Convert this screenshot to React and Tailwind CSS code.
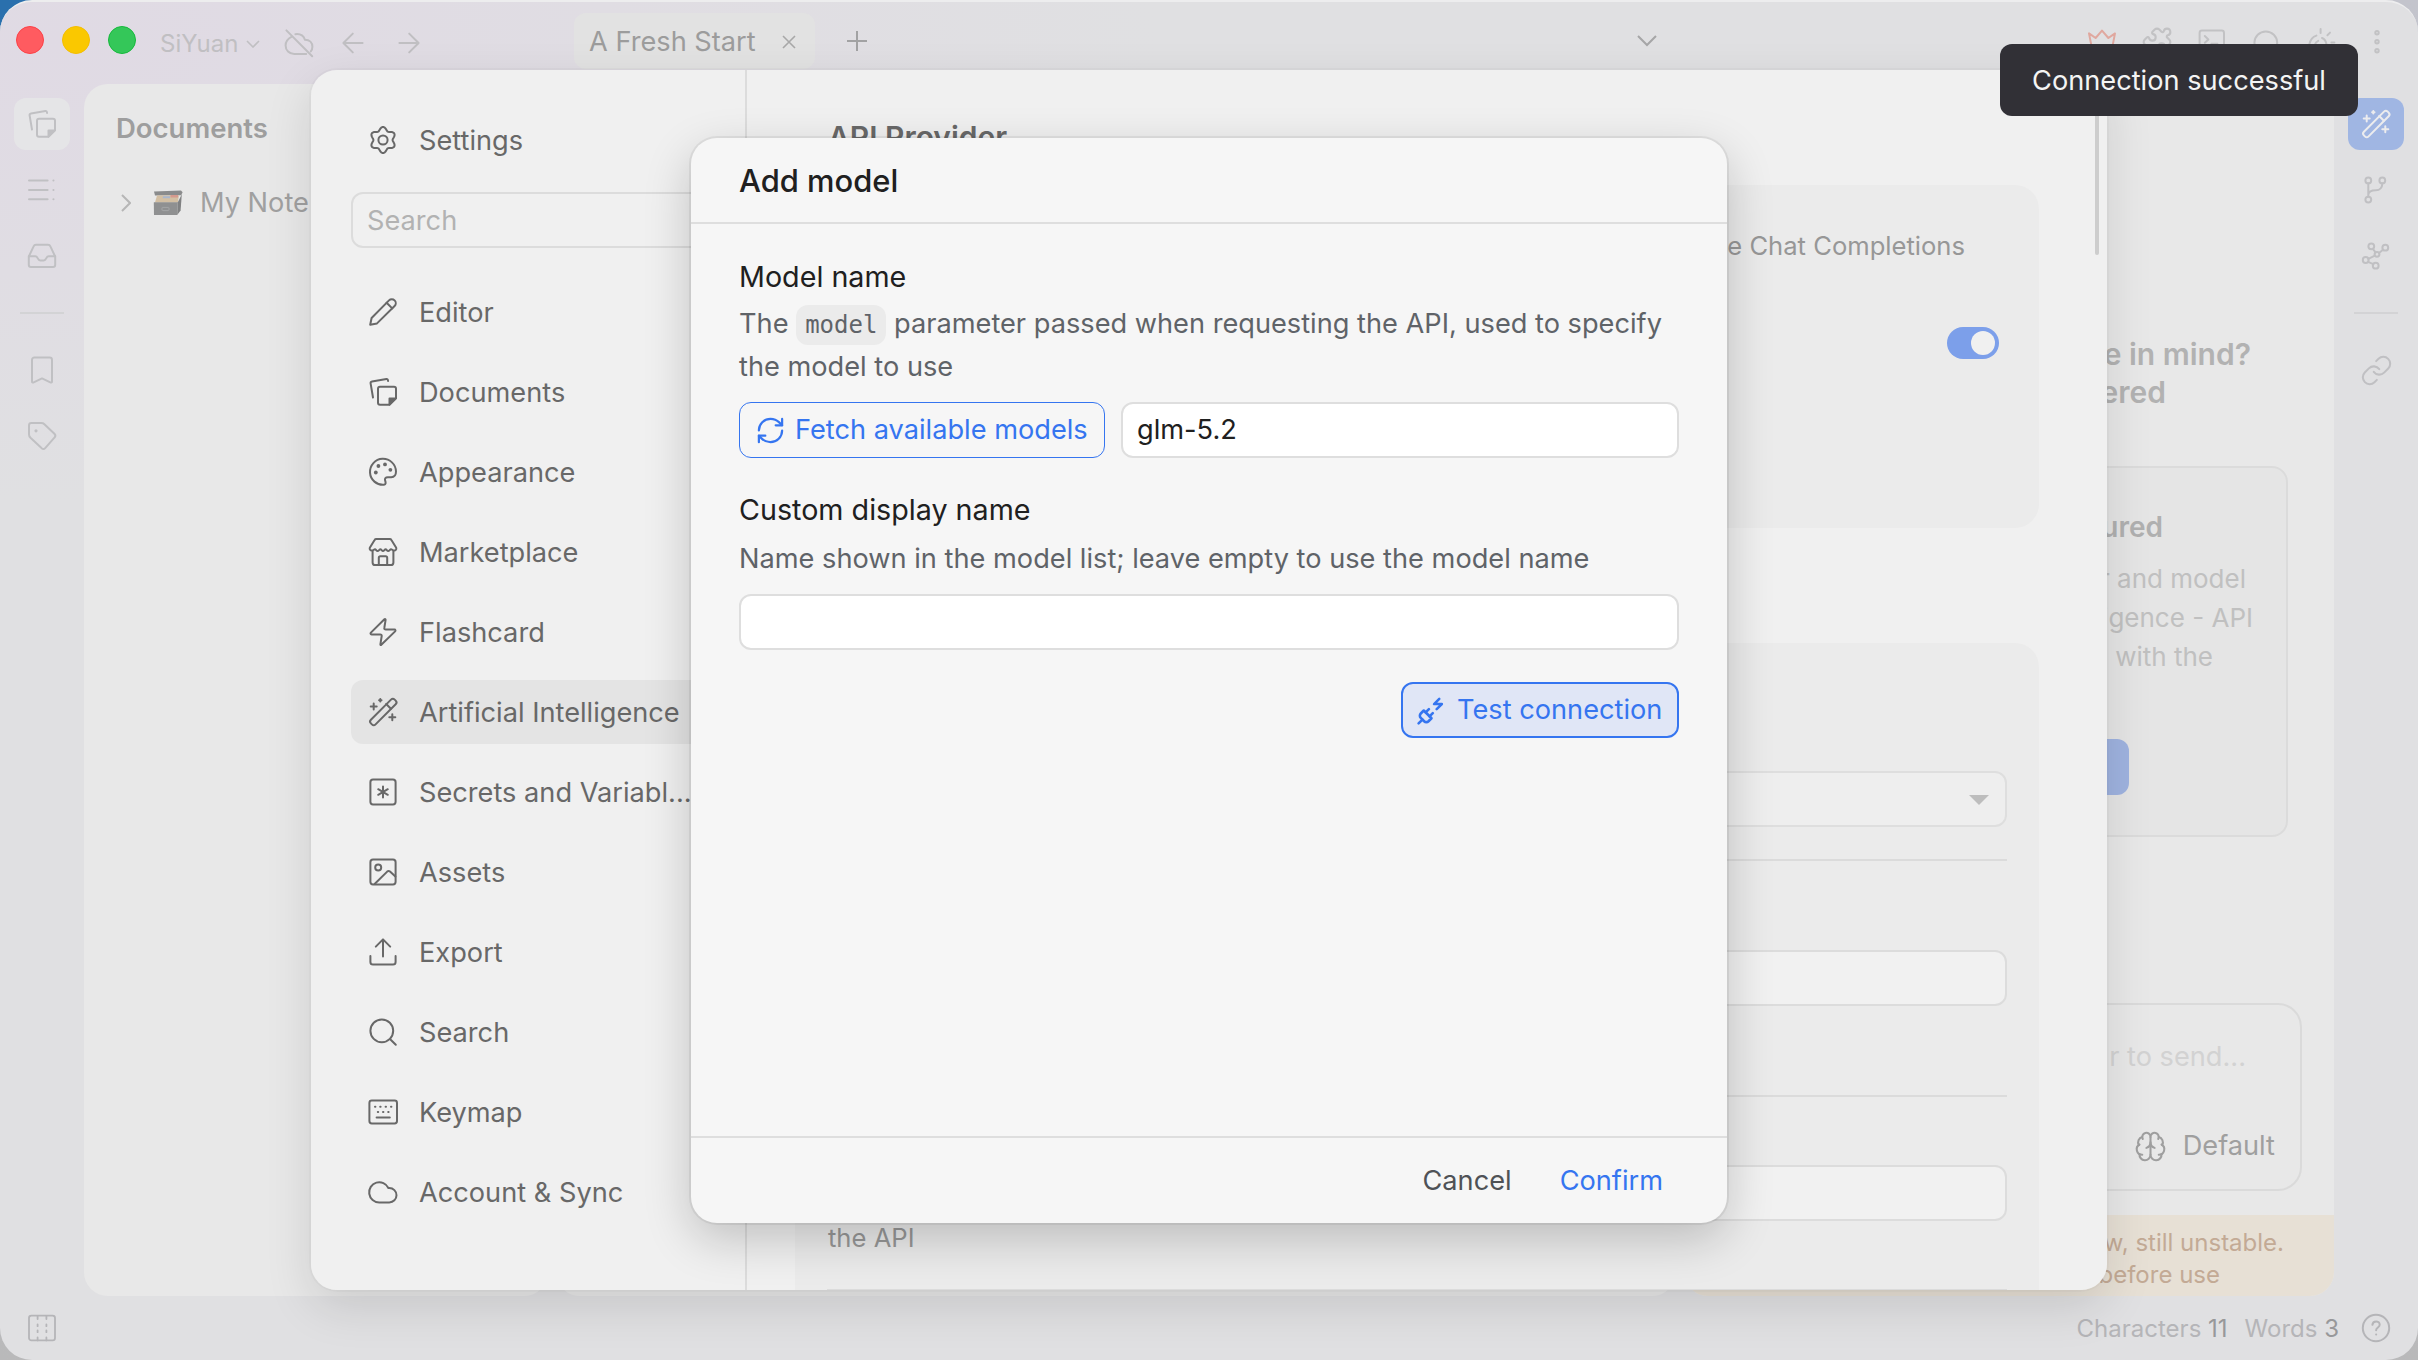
import { Brain, Link, PlugZap, Puzzle, RefreshCw } from 'lucide-react';

// Six-lobed gear outline, sampled once at load
const GEAR = Array.from({ length: 121 }, (_, i) => {
  const a = (i / 120) * Math.PI * 2;
  const r = 11.3 + 1.7 * Math.cos(6 * a);
  const x = (14 + r * Math.sin(a)).toFixed(2);
  const y = (14 - r * Math.cos(a)).toFixed(2);
  return `${i === 0 ? 'M' : 'L'}${x} ${y}`;
}).join('') + 'Z';

function Icon({ className = '', stroke = 2, children }) {
  return (
    <svg
      viewBox="0 0 28 28"
      width="28"
      height="28"
      fill="none"
      stroke="currentColor"
      strokeWidth={stroke}
      strokeLinecap="round"
      strokeLinejoin="round"
      className={`shrink-0 overflow-visible ${className}`}
    >
      {children}
    </svg>
  );
}

const icons = {
  gear: (
    <>
      <path d={GEAR} />
      <circle cx="14" cy="14" r="4.6" />
    </>
  ),
  pencil: (
    <>
      <path d="M1.2 26.8 2.6 20 20 2.4a3.9 3.9 0 0 1 5.6 5.6L8 25.4Z" />
      <path d="m17.6 4.8 5.6 5.6" />
    </>
  ),
  docs: (
    <>
      <path d="M4 19.5 1.6 5.4c-.2-1.1.3-1.8 1.4-2L17.4 1.1c.9-.1 1.3.2 1.5 1l.2.9" />
      <path d="M11 8.8h14a2 2 0 0 1 2 2v9.4l-6.6 6.6H11a2 2 0 0 1-2-2v-14a2 2 0 0 1 2-2Z" />
      <path d="M20.5 26.6v-6.2h6.3Z" fill="currentColor" />
    </>
  ),
  palette: (
    <>
      <path d="M15 26.8A13 13 0 1 1 27 13.6c0 3.6-1.7 5.6-4.8 5.6h-3.4c-2.2 0-3.3 1.3-2.7 3.2.8 2.4.9 4.2-1.1 4.4Z" />
      <g fill="currentColor" stroke="none">
        <circle cx="6.8" cy="14.5" r="1.9" />
        <circle cx="9.4" cy="8" r="1.9" />
        <circle cx="16" cy="6.4" r="1.9" />
        <circle cx="21.4" cy="11.8" r="1.9" />
      </g>
    </>
  ),
  store: (
    <>
      <path d="M.8 9.8 5.6 1.9Q6.1 1 7.2 1h13.6q1.1 0 1.6.9l4.8 7.9c.5 1.4-.5 2.8-2 2.8-1.6 0-2.2-1.4-3.2-1.4s-1.6 1.9-2.8 1.9-1.6-1.9-2.6-1.9-1.5 1.9-2.6 1.9-1.6-1.9-2.6-1.9-1.6 1.9-2.8 1.9-1.6-1.9-2.6-1.9-1.6 1.4-3.2 1.4c-1.5 0-2.5-1.4-2-2.8Z" />
      <path d="M3.6 13v11.4A2.6 2.6 0 0 0 6.2 27h15.6a2.6 2.6 0 0 0 2.6-2.6V13" />
      <path d="M9.8 26.6v-6.8q0-1.6 1.6-1.6h5.2q1.6 0 1.6 1.6v6.8" />
    </>
  ),
  zap: (
    <path d="M15.4 1.2 1.9 14.6c-.7.8-.4 1.8.6 1.8h8.7c1.1 0 1.7.6 1.5 1.6l-1.3 8.4c-.1.6.4.9.9.4L26.1 13.4c.7-.8.4-1.8-.6-1.8h-8.7c-1.1 0-1.7-.6-1.5-1.6l1.3-8.2c.1-.7-.6-1.1-1.2-.6Z" />
  ),
  wand: (
    <>
      <rect x="-2.6" y="10.9" width="33.6" height="6.6" rx="2.6" transform="rotate(-45 14 14)" />
      <path d="m17.2 6 4.7 4.7" />
      <path d="M4.7 5.4v6M1.7 8.4h6M23.3 16.2v6M20.3 19.2h6M11.3 1v2.4M10.1 2.2h2.4" />
    </>
  ),
  secret: (
    <>
      <rect x="1.4" y="1.6" width="25.2" height="24.8" rx="2.6" />
      <path d="M14 8.6v10.8M9.2 11.2l9.6 5.6M18.8 11.2l-9.6 5.6" />
    </>
  ),
  image: (
    <>
      <rect x="1.4" y="1.6" width="25.2" height="24.8" rx="2.6" />
      <circle cx="9.2" cy="9.4" r="3" />
      <path d="m5.6 26 12.6-12.4q1.4-1.3 2.8 0l5.4 5" />
    </>
  ),
  upload: (
    <path d="M1.4 18v6a2.6 2.6 0 0 0 2.6 2.6h20a2.6 2.6 0 0 0 2.6-2.6v-6M14 18.4V1.6M6.8 8.6 14 1.4l7.2 7.2" />
  ),
  search: (
    <>
      <circle cx="12.8" cy="12.8" r="11.4" />
      <path d="m21.2 21.2 5.6 5.6" />
    </>
  ),
  keyboard: (
    <>
      <rect x=".4" y="2.6" width="27.6" height="22.8" rx="2.4" />
      <path d="M6 8.8h.4M11.2 8.8h.4M16.6 8.8h.4M22 8.8h.4M8.8 14h.4M14 14h.4M19.2 14h.4M7.6 19.6h13.2" />
    </>
  ),
  cloud: <path d="M10.2 24.4A10.1 10.1 0 1 1 19.4 10h.9a7.2 7.2 0 0 1 0 14.4Z" />,
  outline: <path d="M1 4.6h18.6M1 14h18.6M1 23.2h18.6M25.4 4.6h.1M25.4 14h.1M25.4 23.2h.1" />,
  inbox: (
    <>
      <path d="M.8 14.6 5.6 4.4Q6.3 2.8 8 2.8h12q1.7 0 2.4 1.6l4.8 10.2v8.2q0 2.2-2.2 2.2H3q-2.2 0-2.2-2.2Z" />
      <path d="M.8 14.2h6.4c1.6 0 1.8.6 2.6 2.2s1.2 2 2.4 2h3.6c1.2 0 1.6-.4 2.4-2s1-2.2 2.6-2.2h6.4" />
    </>
  ),
  bookmark: (
    <path d="M6.4 1.6h15.2a2.4 2.4 0 0 1 2.4 2.4v21.4c0 1.1-.7 1.5-1.7 1L14 22.4l-8.3 4c-1 .5-1.7.1-1.7-1V4a2.4 2.4 0 0 1 2.4-2.4Z" />
  ),
  tag: (
    <>
      <path d="M3.4 1h9.8c1.4 0 2.3.3 3.2 1.2l10 9.6c1.3 1.3 1.3 2.6 0 3.9l-9.2 10.4c-1.1 1.2-2.5 1.2-3.7 0l-11-10.4C1.4 14.6 1 13.8 1 12.4v-9C1 1.900 1.900 1 3.400 1Z" />
      <circle cx="8" cy="8.8" r="1.6" fill="currentColor" stroke="none" />
    </>
  ),
  columns: (
    <>
      <rect x="1" y="1.6" width="26" height="24.8" rx="2.4" />
      <path d="M9.6 2v3M9.600 10.400v1.800M9.600 16.400v1.800M9.600 23.400v3M18.400 2v3M18.400 10.400v1.800M18.400 16.400v1.800M18.400 23.400v3" />
    </>
  ),
  branch: (
    <>
      <circle cx="6.3" cy="4.4" r="2.9" />
      <circle cx="20.3" cy="4.4" r="2.9" />
      <circle cx="6.3" cy="23.6" r="2.9" />
      <path d="M6.3 7.4v13.200M20.300 7.400c0 4-2.400 6.800-6.400 6.800-5 0-7.600 1.400-7.600 4.800" />
    </>
  ),
  graph: (
    <>
      <circle cx="9.3" cy="4.3" r="2.9" />
      <circle cx="23.3" cy="5.7" r="2.9" />
      <circle cx="15" cy="12.3" r="2.4" />
      <circle cx="3.7" cy="18" r="2.9" />
      <circle cx="13.7" cy="23.7" r="2.9" />
      <path d="m10.800 6.800 2.800 3.600M17 11l4-3.200M6.300 16.800l6.600-3.200M6 19.800l5.400 2.400" />
    </>
  ),
  cloudOff: (
    <path d="M6.800 7.600C3 9.600.6 12.600.6 16.400c0 5 3.600 8.600 8.600 8.600h12M10.400 5.200c4.600-.6 8.200 1.800 9.600 5.600 4.600 0 7.400 3 7.400 7 0 1.800-.6 3.400-1.600 4.600M1.400 1.400l25.800 25.800" />
  ),
  arrowLeft: <path d="M23.6 14H4.6M13.8 4.6 4.4 14l9.400 9.400" />,
  arrowRight: <path d="M4.4 14h19M14.200 4.600l9.400 9.400-9.400 9.400" />,
  crown: <path d="M1 7.400 4 22.600h20l3-15.200-6.600 4.600L14 4.600 7.600 12Z" />,
  terminal: (
    <>
      <rect x="1.6" y="4.6" width="24.4" height="22" rx="2.4" />
      <path d="m6.800 10 3.600 3.400-3.600 3.400M13.400 17.800h6" />
    </>
  ),
  spark: (
    <path d="M1.400 18c1-4.400 4-7.400 7-8.400M14 12c2.400 1 4 3.400 4.400 6M12.600 3v4M22 6.600l-2.600 2.600M23.400 16.600h3M7 18.400c.6-2 1.800-3 3.200-3.600" />
  ),
  dots: (
    <>
      <circle cx="14" cy="4.8" r="1.7" />
      <circle cx="14" cy="13.8" r="1.7" />
      <circle cx="14" cy="22.8" r="1.7" />
    </>
  ),
  help: (
    <>
      <circle cx="14" cy="14" r="13.2" />
      <path d="M10.400 10.800c.2-2 1.700-3.400 3.700-3.400s3.600 1.400 3.600 3.300c0 2.700-3.600 3-3.600 5.600M14.100 20.400h.1" />
    </>
  ),
};

const MENU = [
  { label: 'Editor', icon: 'pencil' },
  { label: 'Documents', icon: 'docs' },
  { label: 'Appearance', icon: 'palette' },
  { label: 'Marketplace', icon: 'store' },
  { label: 'Flashcard', icon: 'zap' },
  { label: 'Artificial Intelligence', icon: 'wand', active: true },
  { label: 'Secrets and Variabl...', icon: 'secret' },
  { label: 'Assets', icon: 'image' },
  { label: 'Export', icon: 'upload' },
  { label: 'Search', icon: 'search' },
  { label: 'Keymap', icon: 'keyboard' },
  { label: 'Account & Sync', icon: 'cloud' },
];

// Card file box emoji of the notebook row
function CardBox() {
  return (
    <svg viewBox="0 0 30 26" width="30" height="26" className="shrink-0">
      <path d="M1 1.500 28 .5l1.600 1.800-1.400 3-26.200.2Z" fill="#8a8b8c" />
      <path d="M4 5.400h22l-1.200 7H2Z" fill="#d3bfa3" />
      <path d="M10 6.200h7v2h-7.400Z" fill="#a9b6cc" />
      <path d="M17.500 5h7.500v2.500h-7.500Z" fill="#d69a8e" />
      <path d="M.8 12.200h24l-.6 12.800H1Z" fill="#8f9091" />
      <path d="m24.800 12.200 4-8-1.200 16.400-3.400 4.400Z" fill="#808182" />
      <rect x="9" y="17.400" width="7" height="3.200" rx=".6" fill="none" stroke="#a4a5a6" />
    </svg>
  );
}

function TopBar() {
  return (
    <header className="flex h-[82px] shrink-0 items-start text-[#c0bfc2]">
      <div className="ml-4 mt-6 flex gap-[18px]">
        <span className="size-7 rounded-full border border-[#fb4046] bg-[#ff5b60]" />
        <span className="size-7 rounded-full border border-[#f3bd00] bg-[#fac800]" />
        <span className="size-7 rounded-full border border-[#16b93c] bg-[#34c759]" />
      </div>
      <span className="ml-6 mt-6 w-[86px] text-[24px] leading-9">SiYuan</span>
      <svg viewBox="0 0 14 8" width="14" height="8" fill="none" stroke="currentColor" strokeWidth="1.600" className="mt-[38px]">
        <path d="m1 1 6 6 6-6" />
      </svg>
      <Icon className="ml-[25px] mt-[27px]">{icons.cloudOff}</Icon>
      <Icon className="ml-[26px] mt-[27px]">{icons.arrowLeft}</Icon>
      <Icon className="ml-[28px] mt-[27px]">{icons.arrowRight}</Icon>
      <div className="ml-[151px] mt-[11px] flex h-[56px] w-[241px] items-center rounded-xl bg-[#e2e2e2] pl-[15px] text-[#9c9c9c]">
        <span className="w-[193px] pt-0.5 text-[27.200px]">A Fresh Start</span>
        <svg viewBox="0 0 14 14" width="14" height="14" fill="none" stroke="#a8a8a8" strokeWidth="1.600" className="mt-0.5">
          <path d="m1 1 12 12M13 1 1 13" />
        </svg>
      </div>
      <svg viewBox="0 0 22 22" width="22" height="22" fill="none" stroke="#a2a2a3" strokeWidth="2" className="ml-[31px] mt-[28px]">
        <path d="M11 1v20M1 11h20" />
      </svg>
      <svg viewBox="0 0 20 12" width="20" height="12" fill="none" stroke="#a6a6a7" strokeWidth="2" className="ml-[769px] mt-[33px]">
        <path d="m1 1 9 9 9-9" />
      </svg>
      <div className="ml-[431px] mt-[24px] flex gap-[27px] text-[#c2c2c4]">
        <Icon className="text-[#e0a89f]">{icons.crown}</Icon>
        <Puzzle size={32} strokeWidth={1.6} className="-mx-0.5 shrink-0" />
        <Icon>{icons.terminal}</Icon>
        <Icon className="mt-1">{icons.search}</Icon>
        <Icon>{icons.spark}</Icon>
        <Icon className="mt-0.5">{icons.dots}</Icon>
      </div>
    </header>
  );
}

function LeftDock() {
  return (
    <nav className="flex w-[84px] shrink-0 flex-col items-center pt-[14px] text-[#c0c0c3]">
      <div className="flex h-[52px] w-14 items-center justify-center rounded-xl bg-[#e5e5e7]">
        <Icon>{icons.docs}</Icon>
      </div>
      <Icon className="mt-[26px]">{icons.outline}</Icon>
      <Icon className="mt-[38px]">{icons.inbox}</Icon>
      <span className="mt-[42px] h-0.5 w-11 bg-[#d3d3d5]" />
      <Icon className="mt-[42px]">{icons.bookmark}</Icon>
      <Icon className="mt-[38px]">{icons.tag}</Icon>
    </nav>
  );
}

function RightDock() {
  return (
    <nav className="flex w-[84px] shrink-0 flex-col items-center pt-[14px] text-[#c0c0c3]">
      <div className="flex h-[52px] w-14 items-center justify-center rounded-xl bg-[#a0b6e3] text-[#ececee]">
        <Icon>{icons.wand}</Icon>
      </div>
      <Icon className="mt-[26px]">{icons.branch}</Icon>
      <Icon className="mt-[38px]">{icons.graph}</Icon>
      <span className="mt-[42px] h-0.5 w-11 bg-[#d3d3d5]" />
      <Link size={33} strokeWidth={1.5} className="mt-[40px]" />
    </nav>
  );
}

function ChatPanel() {
  return (
    <section className="flex w-[650px] shrink-0 flex-col overflow-hidden rounded-3xl bg-[#e8e8e8]">
      <div className="mt-[251px] pr-[83px] text-right text-[30px] font-semibold leading-[38px] text-[#b2b2b2]">
        <p>e in mind?</p>
        <p className="pr-[85px]">ered</p>
      </div>
      <div className="ml-[46px] mr-[46px] mt-[55px] h-[371px] rounded-2xl border-2 border-[#dbdbdb] bg-[#e5e5e5] text-right">
        <p className="mt-[38px] pr-[123px] text-[28px] font-semibold leading-[42px] text-[#b0b0b0]">ured</p>
        <div className="mt-[11px] text-[26px] leading-[39px] text-[#c0c0c0]">
          <p className="pr-[40px]">r and model</p>
          <p className="pr-[33px]">igence - API</p>
          <p className="pr-[73px]">with the</p>
        </div>
        <div className="ml-[200px] mt-[63px] h-14 w-[197px] rounded-xl bg-[#9fb3e0]" />
      </div>
      <div className="mx-8 mt-[166px] flex h-[188px] flex-col justify-between rounded-3xl border-2 border-[#dadada] pb-[22px] pr-[25px] pt-[31px] text-right text-[27.200px]">
        <p className="pr-[29px] leading-[42px] text-[#d2d2d2]">r to send...</p>
        <div className="flex items-center justify-end gap-4 leading-[42px] text-[#9f9f9f]">
          <Brain size={33} strokeWidth={1.5} />
          <span>Default</span>
        </div>
      </div>
      <div className="mt-6 h-[81px] bg-[#e7e0d5] pt-3 text-right text-[24px] leading-8 text-[#c3aa95]">
        <p className="pr-[50px]">w, still unstable.</p>
        <p className="pr-[114px]">before use</p>
      </div>
    </section>
  );
}

function SettingsDialog() {
  return (
    <div className="absolute left-[311px] top-[70px] flex h-[1220px] w-[1796px] overflow-hidden rounded-[26px] bg-[#f0f0f0] text-[#686868]">
      <aside className="w-[436px] shrink-0 border-r-2 border-[#dcdcdc] pl-10 pt-[38px]">
        <div className="flex h-16 items-center gap-[22px] pl-[18px] text-[27.200px]">
          <Icon>{icons.gear}</Icon>
          <span className="pt-0.5">Settings</span>
        </div>
        <div className="mt-[20px] flex h-14 items-center rounded-xl border-2 border-[#dcdcdc] pl-[14px] pt-0.5 text-[27.200px] text-[#b2b2b2]">
          Search
        </div>
        <ul className="mt-8 flex flex-col gap-4">
          {MENU.map(item => (
            <li
              key={item.label}
              className={`flex h-16 items-center gap-[22px] rounded-xl pl-[18px] text-[27.200px] whitespace-nowrap ${item.active ? 'bg-[#e4e4e4]' : ''}`}
            >
              <Icon>{icons[item.icon]}</Icon>
              <span className="pt-0.5">{item.label}</span>
            </li>
          ))}
        </ul>
      </aside>
      <div className="flex flex-1 flex-col pl-12 pr-[68px]">
        <h2 className="mt-[46px] pl-[33px] text-[30px] font-semibold leading-[42px]">API Provider</h2>
        <div className="mt-[27px] h-[343px] shrink-0 rounded-3xl bg-[#ebebeb] px-8 pt-[39px] text-right">
          <p className="pr-[42px] text-[25.600px] leading-[44px] text-[#979797]">e Chat Completions</p>
          <div className="ml-auto mr-2 mt-[59px] flex h-8 w-[52px] justify-end rounded-full bg-[#7c9fea] p-1">
            <span className="size-6 rounded-full bg-[#f0f0f0]" />
          </div>
        </div>
        <div className="mt-[115px] h-[700px] shrink-0 rounded-3xl bg-[#ebebeb] px-8 pt-[128px]">
          <div className="flex h-14 items-center justify-end rounded-xl border-2 border-[#dedede] bg-[#eeeeee] pr-4">
            <svg viewBox="0 0 20 10" width="20" height="10" className="mt-0.5">
              <path d="M0 0h20L10 10Z" fill="#bdbdbd" />
            </svg>
          </div>
          <div className="mt-8 h-0.5 bg-[#dbdbdb]" />
          <div className="mt-[89px] h-14 rounded-xl border-2 border-[#dcdcdc] bg-[#f1f1f1]" />
          <div className="mt-[89px] h-0.5 bg-[#dbdbdb]" />
          <div className="mt-[68px] h-14 rounded-xl border-2 border-[#dcdcdc] bg-[#f1f1f1]" />
          <p className="mt-[-2px] pl-px text-[25.600px] leading-[38px] text-[#979797]">the API</p>
          <div className="mt-8 h-0.5 bg-[#dbdbdb]" />
        </div>
      </div>
      <span className="absolute right-[8px] top-0 h-[185px] w-1 rounded-full bg-[#cdcdcd]" />
    </div>
  );
}

function AddModelDialog() {
  return (
    <div className="absolute left-[691px] top-[138px] flex h-[1085px] w-[1036px] flex-col rounded-[26px] bg-[#f6f6f6] text-[#202020] shadow-[0_0_0_2px_rgba(0,0,0,0.06),0_16px_48px_rgba(0,0,0,0.2)]">
      <div className="flex h-[86px] shrink-0 items-center border-b-2 border-[#dedede] pl-12 pt-0.5 text-[30.900px] font-[450]">
        Add model
      </div>
      <div className="flex flex-1 flex-col px-12 pt-[31px] text-[27.200px]">
        <h3 className="text-[28.700px] leading-[44px]">Model name</h3>
        <p className="mt-1 h-[84px] leading-[42px] text-[#5f6368]">
          The{' '}
          <code className="rounded-xl bg-[#ebebeb] px-[9px] py-1.5 font-['DejaVu_Sans_Mono','Liberation_Mono',monospace] text-[24px]">
            model
          </code>
          {' '}parameter passed when requesting the API, used to specify the model to use
        </p>
        <div className="mt-[15px] flex gap-4">
          <button className="flex h-14 w-[366px] items-center gap-[9px] rounded-xl border border-[#3575f0] pl-[15px] whitespace-nowrap text-[#3575f0]">
            <RefreshCw size={31} strokeWidth={1.7} className="shrink-0" />
            Fetch available models
          </button>
          <div className="flex h-14 flex-1 items-center rounded-xl border-2 border-[#dedede] bg-white pl-[14px]">glm-5.2</div>
        </div>
        <h3 className="mt-[30px] text-[28.700px] leading-[44px]">Custom display name</h3>
        <p className="mt-1.5 leading-[42px] text-[#5f6368]">
          Name shown in the model list; leave empty to use the model name
        </p>
        <div className="mt-[14px] h-14 rounded-xl border-2 border-[#dedede] bg-white" />
        <button className="ml-auto mt-8 flex h-14 w-[278px] items-center gap-[10px] rounded-xl border-2 border-[#3575f0] bg-[#e0e6f6] pl-[13px] whitespace-nowrap text-[#3575f0]">
          <PlugZap size={31} strokeWidth={2} className="shrink-0" />
          Test connection
        </button>
      </div>
      <div className="flex h-[87px] shrink-0 items-center justify-end gap-12 border-t-2 border-[#dedede] pr-16 pt-0.5 text-[27.200px]">
        <span className="text-[#4f5256]">Cancel</span>
        <span className="text-[#3575f0]">Confirm</span>
      </div>
    </div>
  );
}

export default function App() {
  return (
    <div className="h-[1360px] w-[2418px] overflow-hidden bg-linear-to-b from-[#c3c4cc] to-[#b9b9ba] font-['Inter','Liberation_Sans',sans-serif]">
      <div className="absolute left-0 top-0 size-10 bg-[#2a70ad]" />
      <div className="relative flex h-[1360px] flex-col overflow-hidden rounded-[32px] border-t-2 border-[#ededee] bg-[#e0e0e2]">
        <div className="flex h-full flex-col bg-[radial-gradient(ellipse_1100px_460px_at_60px_40px,#e0dae4,#e0e0e200)]">
          <TopBar />
          <div className="flex h-[1212px] shrink-0">
            <LeftDock />
            <section className="w-[464px] shrink-0 rounded-3xl bg-[#e8e8e8]">
              <h2 className="ml-8 mt-[23px] text-[27.500px] font-semibold leading-[42px] text-[#9e9e9e]">Documents</h2>
              <div className="ml-[37px] mt-[33px] flex h-[42px] items-center text-[27.200px] text-[#a0a0a0]">
                <svg viewBox="0 0 10 18" width="10" height="18" fill="none" stroke="#b6b6b6" strokeWidth="2">
                  <path d="m1 1 8 8-8 8" />
                </svg>
                <span className="ml-[22px] mr-[17px]"><CardBox /></span>
                My Note
              </div>
            </section>
            <section className="mx-2 flex-1 rounded-3xl bg-[#e8e8e8]" />
            <ChatPanel />
            <RightDock />
          </div>
          <footer className="flex h-16 items-center text-[24px] text-[#b5b5b8]">
            <Icon className="ml-[28px]" stroke={1.8}>{icons.columns}</Icon>
            <span className="ml-auto pt-0.5">Characters <b className="font-normal text-[#98989a]">11</b></span>
            <span className="ml-[17px] pt-0.5">Words <b className="font-normal text-[#98989a]">3</b></span>
            <Icon className="ml-[23px] mr-7">{icons.help}</Icon>
          </footer>
        </div>
      </div>
      {/* Dialog layers over the workspace */}
      <div className="absolute left-[311px] top-[70px] h-[1220px] w-[1796px] rounded-[26px] shadow-[0_0_0_2px_rgba(0,0,0,0.02),0_16px_48px_rgba(0,0,0,0.12)]" />
      <SettingsDialog />
      <AddModelDialog />
      <div className="absolute left-[2000px] top-[44px] flex h-[72px] w-[358px] items-center justify-center rounded-xl bg-[#313036] pt-0.5 text-[27.200px] text-[#f4f4f4]">
        Connection successful
      </div>
    </div>
  );
}
